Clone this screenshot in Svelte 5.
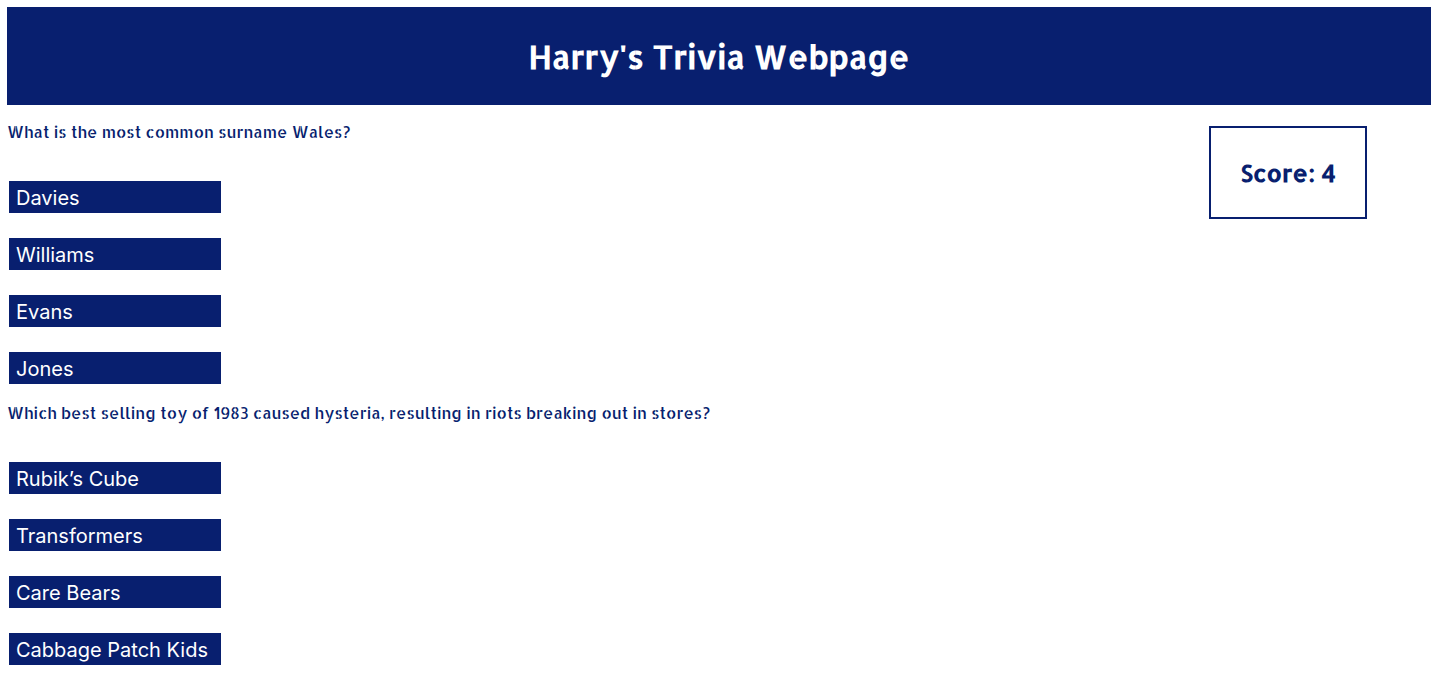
<script>
  const questions = [
    { text: 'What is the most common surname Wales?', answers: ['Davies', 'Williams', 'Evans', 'Jones'] },
    {
      text: 'Which best selling toy of 1983 caused hysteria, resulting in riots breaking out in stores?',
      answers: ['Rubik’s Cube', 'Transformers', 'Care Bears', 'Cabbage Patch Kids']
    }
  ];
  let score = $state(4);
</script>

<div class="page">
  <header><h1>Harry's Trivia Webpage</h1></header>
  <div class="content">
    <main>
      {#each questions as question}
        <section>
          <h2>{question.text}</h2>
          <div class="answers">
            {#each question.answers as answer}
              <button type="button">{answer}</button>
            {/each}
          </div>
        </section>
      {/each}
    </main>
    <aside>Score: {score}</aside>
  </div>
</div>

<style>
  :global(body) {
    margin: 0;
    background: #fff;
  }
  .page {
    padding: 7px 6px 12px 7px;
    color: #081f6f;
    font-family: 'Allerta Stencil', 'Open Sans', sans-serif;
  }
  header {
    padding: 26px 16px 24px;
    background: #081f6f;
    color: #fff;
    text-align: center;
  }
  h1 {
    margin: 0;
    font-size: 32px;
    line-height: 48px;
    font-weight: 700;
  }
  .content {
    display: flex;
    align-items: flex-start;
    justify-content: space-between;
    gap: 24px;
  }
  main {
    display: grid;
    gap: 17px;
    padding-top: 15px;
  }
  h2 {
    margin: 0 0 37px;
    font-size: 16px;
    line-height: 24px;
    font-weight: 400;
  }
  .answers {
    display: grid;
    justify-items: start;
    gap: 25px;
    padding-left: 2px;
  }
  button {
    width: 212px;
    height: 32px;
    padding: 1px 7px 0;
    border: 0;
    border-radius: 0;
    background: #081f6f;
    color: #fff;
    font: 20px/32px Inter, sans-serif;
    text-align: left;
    cursor: pointer;
  }
  aside {
    margin: 21px 64px 0 0;
    padding: 28px 29px;
    border: 2px solid #081f6f;
    font-size: 24px;
    line-height: 33px;
    font-weight: 700;
    text-align: center;
    white-space: nowrap;
  }
</style>
